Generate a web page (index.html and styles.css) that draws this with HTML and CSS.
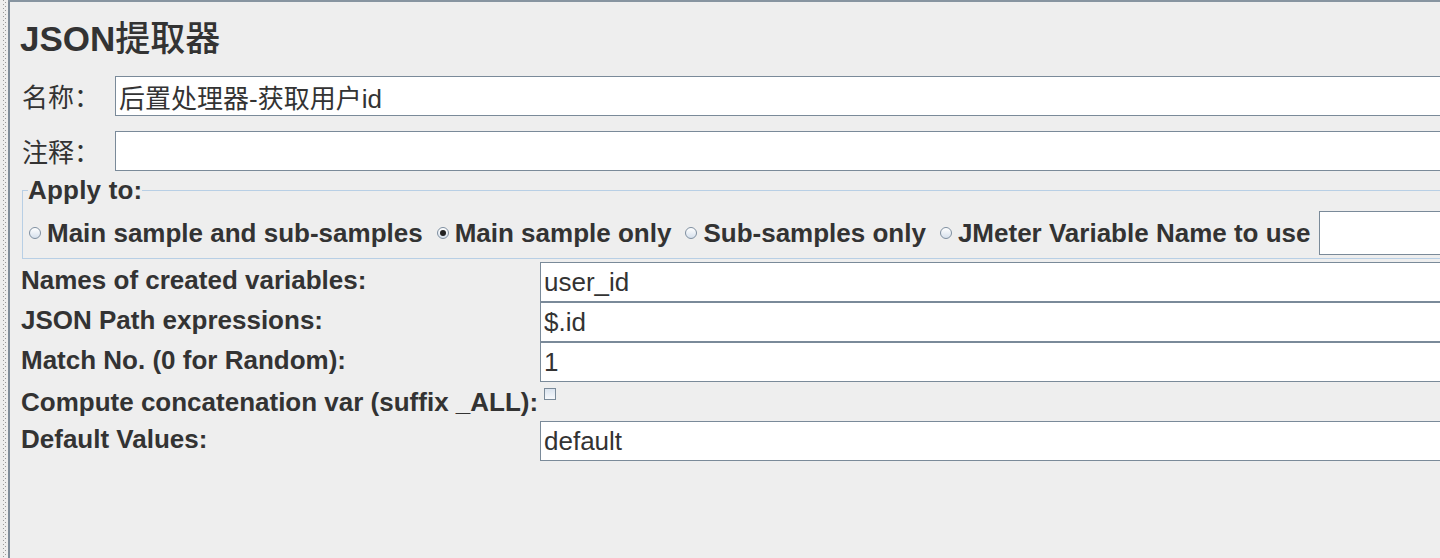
FILE: index.html
```html
<!DOCTYPE html>
<html lang="zh">
<head>
<meta charset="utf-8">
<title>JSON提取器</title>
<link rel="stylesheet" href="styles.css">
</head>
<body>
<div class="app">
  <div class="splitter">
    <svg class="dots" width="8" height="100%" xmlns="http://www.w3.org/2000/svg">
      <defs>
        <pattern id="dotpat" width="8" height="4" patternUnits="userSpaceOnUse">
          <rect x="3" y="0" width="1" height="1" fill="#9a9a9a"/>
          <rect x="5" y="2" width="1" height="1" fill="#9a9a9a"/>
        </pattern>
      </defs>
      <rect x="0" y="0" width="8" height="100%" fill="url(#dotpat)"/>
    </svg>
  </div>
  <div class="panel">
    <h1 class="title">JSON<span class="title-cjk">提取器</span></h1>
    <div class="field-row">
      <label class="cjk-label">名称：</label>
      <input class="text-box" type="text" value="后置处理器-获取用户id">
    </div>
    <div class="field-row comment-row">
      <label class="cjk-label">注释：</label>
      <input class="text-box" type="text" value="">
    </div>
    <fieldset class="apply">
      <legend class="apply-legend">Apply to:</legend>
      <div class="radio-row">
        <label class="radio-item"><input class="radio" type="radio" name="scope"><span>Main sample and sub-samples</span></label>
        <label class="radio-item"><input class="radio" type="radio" name="scope" checked><span>Main sample only</span></label>
        <label class="radio-item"><input class="radio" type="radio" name="scope"><span>Sub-samples only</span></label>
        <label class="radio-item"><input class="radio" type="radio" name="scope"><span>JMeter Variable Name to use</span></label>
        <input class="text-box var-box" type="text" value="">
      </div>
    </fieldset>
    <div class="grid">
      <label class="grid-label">Names of created variables:</label>
      <input class="text-box" type="text" value="user_id">
      <label class="grid-label">JSON Path expressions:</label>
      <input class="text-box" type="text" value="$.id">
      <label class="grid-label">Match No. (0 for Random):</label>
      <input class="text-box" type="text" value="1">
      <label class="grid-label grid-label-check">Compute concatenation var (suffix _ALL):</label>
      <div class="check-cell"><input class="check" type="checkbox"></div>
      <label class="grid-label">Default Values:</label>
      <input class="text-box" type="text" value="default">
    </div>
  </div>
</div>
</body>
</html>
```

FILE: styles.css
```css
html, body {
  margin: 0;
  padding: 0;
  background: #eeeeee;
  overflow: hidden;
}

body {
  font-family: "Liberation Sans", "Noto Sans CJK SC", sans-serif;
  color: #333333;
}

.app {
  display: flex;
  width: 100%;
  height: 100vh;
}

.splitter {
  width: 8px;
  flex: 0 0 8px;
  height: 100%;
}

.dots {
  display: block;
  height: 100%;
}

.panel {
  flex: 1;
  min-width: 0;
  border-left: 2px solid #7f8c99;
  border-top: 2px solid #8794a0;
  display: flex;
  flex-direction: column;
}

.title {
  margin: 0;
  padding: 14px 0 0 10px;
  height: 40px;
  font-size: 35px;
  line-height: 40px;
  font-weight: bold;
  font-family: "Liberation Sans", "Noto Sans CJK SC", sans-serif;
  white-space: nowrap;
}

.title-cjk {
  font-family: "Noto Sans CJK SC", sans-serif;
  font-weight: 500;
}

.field-row {
  display: flex;
  align-items: center;
  margin-top: 20px;
  padding-left: 12px;
}

.comment-row {
  margin-top: 15px;
}

.cjk-label {
  width: 93px;
  flex: 0 0 93px;
  font-size: 26px;
  font-family: "Noto Sans CJK SC", sans-serif;
  line-height: 40px;
}

.text-box {
  flex: 1;
  min-width: 0;
  height: 40px;
  box-sizing: border-box;
  margin: 0;
  padding: 0 3px;
  border: 1px solid #7a8a99;
  border-right: none;
  background: #ffffff;
  color: #333333;
  font-family: "Liberation Sans", "Noto Sans CJK SC", sans-serif;
  font-size: 26px;
  outline: none;
}

.apply {
  margin: 5px 0 0 12px;
  padding: 0 0 3px 5px;
  border: 1px solid #b8cfe5;
  border-right: none;
  min-width: 0;
}

.apply-legend {
  padding: 0;
  font-size: 26px;
  font-weight: bold;
  line-height: 28px;
  letter-spacing: 0.2px;
}

.radio-row {
  display: flex;
  align-items: center;
  padding-top: 7px;
}

.radio-item {
  display: flex;
  align-items: center;
  font-size: 26px;
  font-weight: bold;
  margin-right: 13px;
  white-space: nowrap;
}

.radio-item:last-of-type {
  margin-right: 8px;
}

.radio {
  appearance: none;
  -webkit-appearance: none;
  width: 12px;
  height: 12px;
  margin: 0 6px 0 1px;
  border: 1px solid #7f8fa0;
  border-radius: 50%;
  box-sizing: border-box;
  background: linear-gradient(#ffffff, #d6e0ec);
  position: relative;
}

.radio:checked::after {
  content: "";
  position: absolute;
  left: 2px;
  top: 2px;
  width: 6px;
  height: 6px;
  border-radius: 50%;
  background: #222222;
}

.var-box {
  flex: 1;
  height: 44px;
}

.grid {
  display: grid;
  grid-template-columns: 530px 1fr;
  grid-template-rows: 40px 40px 40px 39px 40px;
  margin-top: 3px;
}

.grid-label {
  padding-left: 11px;
  font-size: 26px;
  font-weight: bold;
  line-height: 36px;
  align-self: center;
  padding-bottom: 5px;
  white-space: nowrap;
}

.grid-label-check {
  padding-bottom: 0;
}

.check-cell {
  padding: 6px 0 0 4px;
}

.check {
  appearance: none;
  -webkit-appearance: none;
  display: block;
  width: 12px;
  height: 12px;
  margin: 0;
  box-sizing: border-box;
  border: 1px solid #7a8a99;
  background: linear-gradient(#dbe4ef, #f7f9fc);
}
```
